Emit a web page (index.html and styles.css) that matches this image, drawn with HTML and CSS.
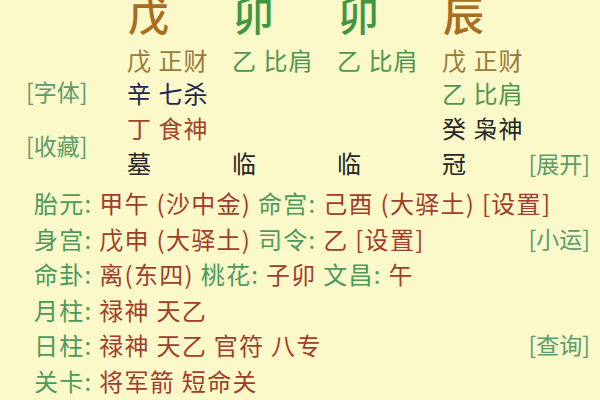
FILE: index.html
```html
<!DOCTYPE html>
<html lang="zh">
<head>
<meta charset="utf-8">
<link rel="stylesheet" href="styles.css">
</head>
<body>
<div class="page">
  <div class="pillars">
    <div class="big c1 brown">戊</div>
    <div class="big c2 green">卯</div>
    <div class="big c3 green">卯</div>
    <div class="big c4 brown">辰</div>

    <div class="side">
      <span class="link">[字体]</span>
      <span class="link">[收藏]</span>
    </div>

    <div class="cell c1 r2 olive">戊 正财</div>
    <div class="cell c2 r2 leaf">乙 比肩</div>
    <div class="cell c3 r2 leaf">乙 比肩</div>
    <div class="cell c4 r2 olive">戊 正财</div>

    <div class="cell c1 r3 navy">辛 七杀</div>
    <div class="cell c4 r3 leaf">乙 比肩</div>

    <div class="cell c1 r4 rust">丁 食神</div>
    <div class="cell c4 r4 dark">癸 枭神</div>

    <div class="cell c1 r5 dark">墓</div>
    <div class="cell c2 r5 dark">临</div>
    <div class="cell c3 r5 dark">临</div>
    <div class="cell c4 r5 dark">冠</div>
    <div class="cell r5 more"><span class="link">[展开]</span></div>
  </div>

  <div class="info">
    <div class="row">
      <div><span class="lbl">胎元:</span> <span class="val">甲午 (沙中金)</span> <span class="lbl">命宫:</span> <span class="val">己酉 (大驿土) [设置]</span></div>
    </div>
    <div class="row">
      <div><span class="lbl">身宫:</span> <span class="val">戊申 (大驿土)</span> <span class="lbl">司令:</span> <span class="val">乙 [设置]</span></div>
      <span class="link">[小运]</span>
    </div>
    <div class="row">
      <div><span class="lbl">命卦:</span> <span class="val">离(东四)</span> <span class="lbl">桃花:</span> <span class="val">子卯</span> <span class="lbl">文昌:</span> <span class="val">午</span></div>
    </div>
    <div class="row">
      <div><span class="lbl">月柱:</span> <span class="val">禄神 天乙</span></div>
    </div>
    <div class="row">
      <div><span class="lbl">日柱:</span> <span class="val">禄神 天乙 官符 八专</span></div>
      <span class="link">[查询]</span>
    </div>
    <div class="row">
      <div><span class="lbl">关卡:</span> <span class="val">将军箭 短命关</span></div>
    </div>
  </div>
</div>
</body>
</html>
```

FILE: styles.css
```css
html, body {
  margin: 0;
  padding: 0;
  background: #fbf8c9;
}

body {
  width: 600px;
  height: 400px;
  overflow: hidden;
  font-family: "Noto Sans CJK SC", "Noto Sans", sans-serif;
  font-size: 24px;
  letter-spacing: 1px;
}

.page {
  padding-right: 10px;
}

.pillars {
  display: grid;
  grid-template-columns: 127px 105px 105px 105px 85px 1fr;
  grid-template-rows: 40px 35px 35px 35px 35px;
}

.big {
  grid-row: 1;
  align-self: start;
  font-size: 41px;
  font-weight: 500;
  line-height: 26px;
  letter-spacing: 0;
  padding-left: 1px;
}

.c1 { grid-column: 2; }
.c2 { grid-column: 3; }
.c3 { grid-column: 4; }
.c4 { grid-column: 5; }
.r2 { grid-row: 2; }
.r3 { grid-row: 3; }
.r4 { grid-row: 4; }
.r5 { grid-row: 5; }

.cell {
  line-height: 35px;
  white-space: nowrap;
}

.r2 { padding-top: 2px; }

.side {
  grid-column: 1;
  grid-row: 2 / span 4;
  display: flex;
  flex-direction: column;
  align-items: flex-start;
  gap: 19px;
  padding: 34px 0 0 26px;
  line-height: 35px;
  font-size: 23px;
  letter-spacing: 0;
}

.more {
  grid-column: 6;
  justify-self: end;
}

.more .link,
.row .link {
  font-size: 23px;
  letter-spacing: 0;
}

.brown { color: #a86d1f; }
.green { color: #3f9742; }
.olive { color: #9a7838; }
.leaf { color: #4e9551; }
.navy { color: #1f2550; }
.rust { color: #a2442a; }
.dark { color: #262626; }

.link { color: #5c9c6e; }

.info {
  margin-top: 5px;
  padding-left: 34px;
  letter-spacing: 1.3px;
}

.row {
  display: flex;
  justify-content: space-between;
  line-height: 35.5px;
  white-space: nowrap;
}

.lbl { color: #4b9a5c; }
.val { color: #a33d2b; }
```
